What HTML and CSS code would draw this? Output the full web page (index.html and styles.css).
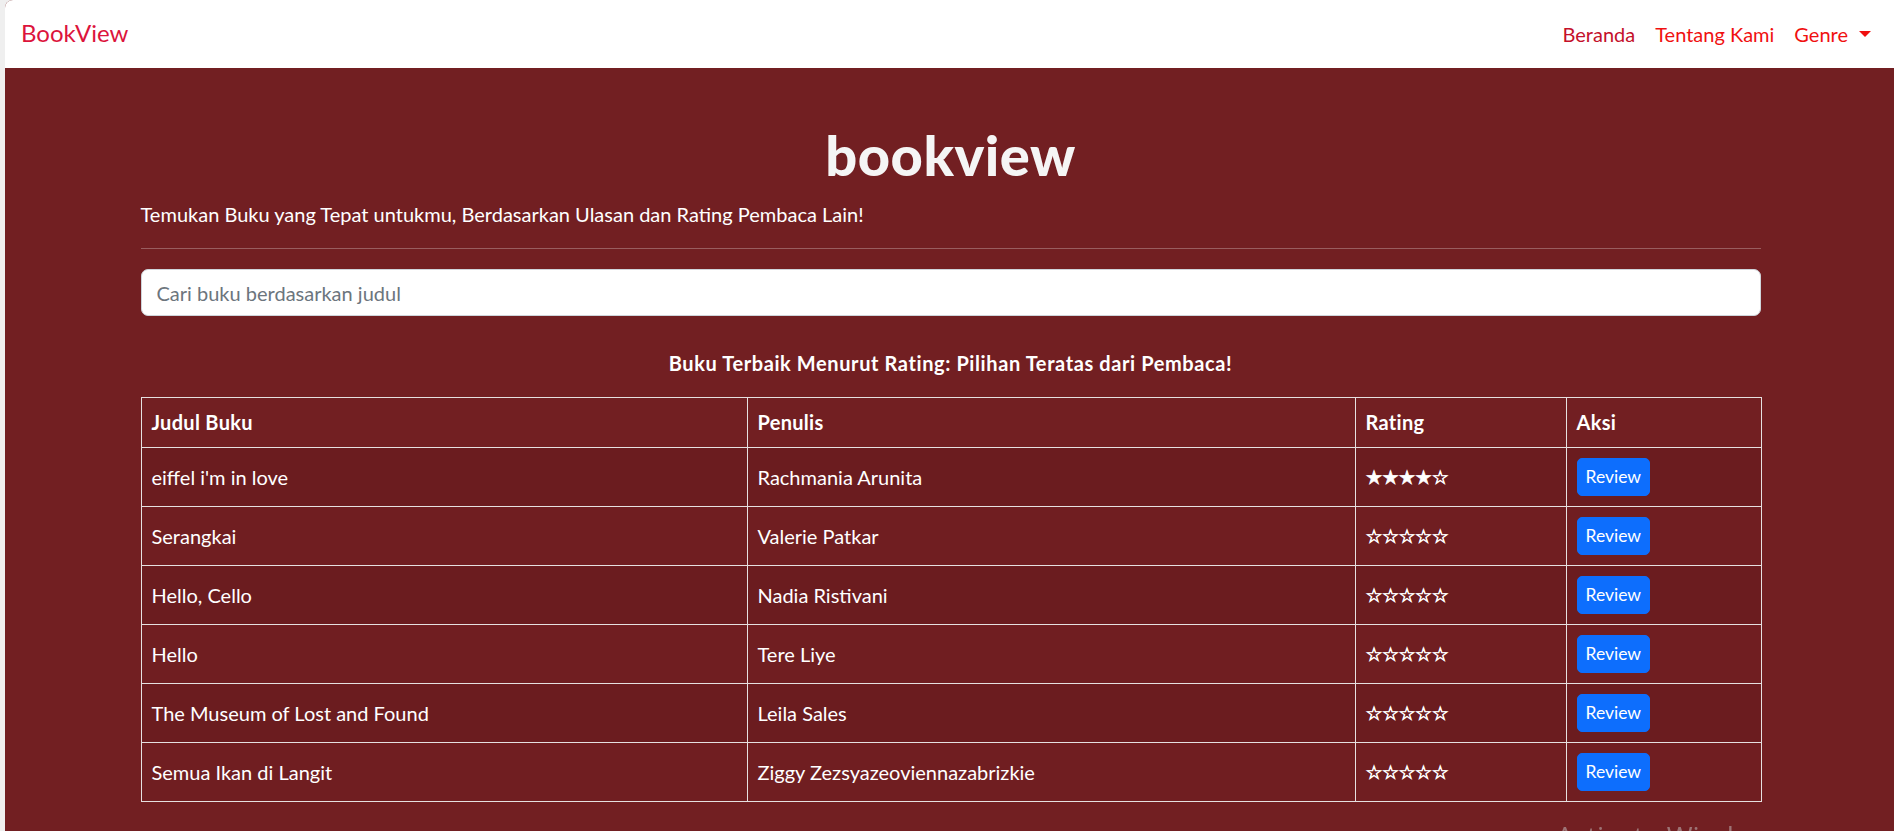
FILE: index.html
```html
<!DOCTYPE html>
<html lang="id">
<head>
<meta charset="utf-8">
<title>BookView</title>
<link rel="stylesheet" href="styles.css">
</head>
<body>
<div class="window">
  <nav class="navbar">
    <a class="brand" href="#">BookView</a>
    <ul class="nav-links">
      <li><a class="nav-link active" href="#">Beranda</a></li>
      <li><a class="nav-link" href="#">Tentang Kami</a></li>
      <li><a class="nav-link dropdown" href="#">Genre<span class="caret"></span></a></li>
    </ul>
  </nav>
  <main class="hero">
    <div class="container">
      <h1 class="title">bookview</h1>
      <p class="lead">Temukan Buku yang Tepat untukmu, Berdasarkan Ulasan dan Rating Pembaca Lain!</p>
      <hr class="divider">
      <input class="search" type="text" placeholder="Cari buku berdasarkan judul">
      <h5 class="table-title">Buku Terbaik Menurut Rating: Pilihan Teratas dari Pembaca!</h5>
      <table class="books">
        <colgroup>
          <col class="c-title"><col class="c-author"><col class="c-rating"><col class="c-action">
        </colgroup>
        <thead>
          <tr><th>Judul Buku</th><th>Penulis</th><th>Rating</th><th>Aksi</th></tr>
        </thead>
        <tbody>
          <tr><td>eiffel i'm in love</td><td>Rachmania Arunita</td><td><span class="stars">★★★★☆</span></td><td><button class="btn">Review</button></td></tr>
          <tr><td>Serangkai</td><td>Valerie Patkar</td><td><span class="stars">☆☆☆☆☆</span></td><td><button class="btn">Review</button></td></tr>
          <tr><td>Hello, Cello</td><td>Nadia Ristivani</td><td><span class="stars">☆☆☆☆☆</span></td><td><button class="btn">Review</button></td></tr>
          <tr><td>Hello</td><td>Tere Liye</td><td><span class="stars">☆☆☆☆☆</span></td><td><button class="btn">Review</button></td></tr>
          <tr><td>The Museum of Lost and Found</td><td>Leila Sales</td><td><span class="stars">☆☆☆☆☆</span></td><td><button class="btn">Review</button></td></tr>
          <tr><td>Semua Ikan di Langit</td><td>Ziggy Zezsyazeoviennazabrizkie</td><td><span class="stars">☆☆☆☆☆</span></td><td><button class="btn">Review</button></td></tr>
        </tbody>
      </table>
    </div>
  </main>
</div>
<div class="watermark">Activate Windows</div>
</body>
</html>
```

FILE: styles.css
```css
* { box-sizing: border-box; }

html, body {
  margin: 0;
  height: 100%;
  overflow: hidden;
}

body {
  background: #efefef;
  font-family: "Lato", "Open Sans", sans-serif;
  font-size: 20px;
  line-height: 1.5;
  color: #fff;
}

.window {
  margin-left: 5px;
  height: 100%;
  border-top-left-radius: 8px;
  overflow: hidden;
  background: #721f22;
}

.navbar {
  height: 68px;
  background: #fff;
  display: flex;
  align-items: center;
  justify-content: space-between;
  padding: 0 13px 0 16px;
}

.brand {
  color: #dc143c;
  font-size: 24px;
  text-decoration: none;
  line-height: 1;
  padding-bottom: 2px;
}

.nav-links {
  list-style: none;
  display: flex;
  margin: 0;
  padding: 0;
}

.nav-link {
  display: flex;
  align-items: center;
  padding: 0 10px;
  color: #f01010;
  text-decoration: none;
  font-size: 20px;
}

.nav-link.active {
  color: #c4102a;
}

.caret {
  display: inline-block;
  margin-left: 11px;
  border-top: 6px solid #f01010;
  border-left: 6px solid transparent;
  border-right: 6px solid transparent;
}

.hero {
  padding-top: 55px;
}

.container {
  width: 1620px;
  margin: 0 auto;
  position: relative;
  left: 1px;
}

.title {
  margin: 0;
  text-align: center;
  font-family: "Lato", sans-serif;
  font-weight: 900;
  font-size: 56px;
  line-height: 64px;
  color: #f5f5f5;
  letter-spacing: 0.5px;
}

.lead {
  margin: 12px 0 0;
  line-height: 30px;
  color: #fff;
}

.divider {
  border: 0;
  border-top: 1px solid rgba(255, 255, 255, 0.28);
  margin: 19px 0 20px;
}

.search {
  display: block;
  width: 100%;
  height: 47px;
  padding: 0 15px;
  border: 1px solid #ced4da;
  border-radius: 7px;
  background: #fff;
  font-family: inherit;
  font-size: 20px;
  color: #212529;
  outline: none;
}

.search::placeholder {
  color: #6c757d;
}

.table-title {
  margin: 32px 0 19px;
  text-align: center;
  font-size: 20px;
  letter-spacing: 0.6px;
  font-weight: 700;
  line-height: 30px;
  color: #fff;
}

.books {
  width: 100%;
  border-collapse: collapse;
  table-layout: fixed;
}

.c-title { width: 606px; }
.c-author { width: 608px; }
.c-rating { width: 211px; }
.c-action { width: 195px; }

.books th,
.books td {
  border: 1px solid #e6e0e0;
  padding: 10px;
  text-align: left;
  vertical-align: middle;
  font-size: 20px;
  line-height: 29px;
  color: #fff;
}

.books th {
  font-weight: 700;
  letter-spacing: 0.3px;
}

.books tbody tr:nth-child(odd) td {
  background: #6b1c1f;
}

.books tbody tr:nth-child(even) td {
  background: #701e21;
}

.books td {
  height: 59px;
}

.stars {
  font-family: "DejaVu Sans", sans-serif;
  font-size: 19px;
  color: #fff;
  -webkit-text-stroke: 0.7px #fff;
  letter-spacing: -0.5px;
}

.btn {
  display: inline-block;
  background: #0d6efd;
  color: #fff;
  border: 1px solid #0d6efd;
  border-radius: 5px;
  padding: 4px 8px 4px;
  font-family: inherit;
  font-size: 17.5px;
  line-height: 28px;
  cursor: pointer;
}

.watermark {
  position: fixed;
  left: 1556px;
  top: 815px;
  font-family: "Open Sans", sans-serif;
  font-size: 28px;
  color: rgba(200, 200, 200, 0.5);
  white-space: nowrap;
}
```
